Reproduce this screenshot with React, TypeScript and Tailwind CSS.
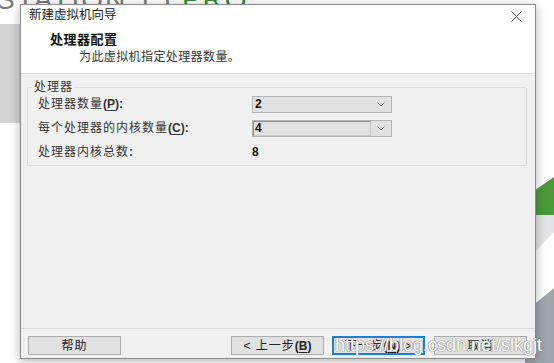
import { ReactNode } from 'react'

const FONT = "font-['Liberation_Sans','Noto_Sans_CJK_SC',sans-serif]"

function Chevron() {
  return (
    <svg width="8" height="5" viewBox="0 0 8 5">
      <path d="M0.5 0.5 L4 4 L7.5 0.5" fill="none" stroke="#7a7a7a" strokeWidth="1" />
    </svg>
  )
}

function Key({ k }: { k: string }) {
  return <span className="underline underline-offset-2">{k}</span>
}

function Btn({ children, primary }: { children: ReactNode; primary?: boolean }) {
  return (
    <button
      className={
        primary
          ? 'w-[93px] h-[19px] flex items-center justify-center bg-[#e1e1e1] border-2 border-[#1a7fd6] text-[12px] text-[#222] tracking-[1px]'
          : 'w-[93px] h-[19px] flex items-center justify-center bg-[#e1e1e1] border border-[#adadad] text-[12px] text-[#222] tracking-[1px]'
      }
    >
      {children}
    </button>
  )
}

export default function App() {
  return (
    <div className={`relative w-[554px] h-[363px] overflow-hidden bg-white ${FONT}`}>
      {/* splash behind the wizard */}
      <div className="absolute left-[-4px] top-[-14px] text-[28px] leading-[28px] tracking-[2px] text-[#7b7b7b] whitespace-nowrap font-['Liberation_Sans',sans-serif]">
        STATION 15 <span className="text-[#2f8a3c]">PRO</span>
      </div>
      <div className="absolute left-0 top-[24px] w-[30px] h-[99px] bg-[#d4d4d4]" />
      <svg className="absolute left-[525px] top-0" width="29" height="363" viewBox="0 0 29 363">
        <polygon points="29,177 0,197 0,215 29,215" fill="#4a9a3a" />
        <polygon points="0,215 29,215 29,232 0,262" fill="#e3e3e5" />
        <polygon points="0,312 29,288 29,363 0,363" fill="#9ea6ad" />
      </svg>

      {/* wizard window */}
      <div className="absolute left-[20px] top-[4px] w-[516px] h-[355px] flex flex-col border border-[#8a8a8a] bg-[#f0f0f0] shadow-[0_2px_10px_rgba(0,0,0,0.3)]">
        <div className="bg-white">
          <div className="h-[21px] flex items-center justify-between pl-[8px] pr-[13px]">
            <span className="text-[12.5px] text-[#222]">新建虚拟机向导</span>
            <svg width="11" height="11" viewBox="0 0 11 11" className="mt-[2px]">
              <path d="M0.5 0.5 L10.5 10.5 M10.5 0.5 L0.5 10.5" stroke="#555" strokeWidth="1" />
            </svg>
          </div>
          <div className="h-[48px] border-b border-[#d8d8d8] pt-[5px]">
            <div className="pl-[29px] text-[13px] leading-[18px] font-bold tracking-[0.5px] text-[#111]">处理器配置</div>
            <div className="pl-[58px] text-[12px] leading-[17px] tracking-[0.4px] text-[#333]">为此虚拟机指定处理器数量。</div>
          </div>
        </div>

        <div className="flex-1 pt-[13px] pl-[6px] pr-[8px] border-b border-[#d8d8d8]">
          <div className="relative border border-[#dcdcdc] rounded-[2px] pt-[4px] pb-[1px] pl-[10px]">
            <span className="absolute left-[4px] top-[-9px] px-[2px] bg-[#f0f0f0] text-[12px] leading-[16px] tracking-[1px] text-[#333]">处理器</span>
            <div className="h-[24px] flex items-center">
              <span className="w-[214px] text-[12px] tracking-[1px] text-[#333]">
                处理器数量<span className="font-bold tracking-normal">(<Key k="P" />):</span>
              </span>
              <div className="w-[140px] h-[17px] flex items-center justify-between bg-[#e1e1e1] border border-[#b4b4b4] pl-[2px] pr-[6px]">
                <span className="text-[12px] font-bold text-[#111]">2</span>
                <Chevron />
              </div>
            </div>
            <div className="h-[24px] flex items-center">
              <span className="w-[214px] text-[12px] tracking-[1px] text-[#333]">
                每个处理器的内核数量<span className="font-bold tracking-normal">(<Key k="C" />):</span>
              </span>
              <div className="w-[140px] h-[17px] flex items-center bg-[#e1e1e1] border border-[#b4b4b4]">
                <div className="w-[118px] h-[15px] flex items-center border border-[#8e8e8e] border-r-[#c8c8c8] border-b-[#c8c8c8] pl-[1px]">
                  <span className="text-[12px] font-bold text-[#111]">4</span>
                </div>
                <div className="flex-1 flex justify-center">
                  <Chevron />
                </div>
              </div>
            </div>
            <div className="h-[24px] flex items-center">
              <span className="w-[214px] text-[12px] tracking-[1px] text-[#333]">
                处理器内核总数<span className="font-bold tracking-normal">:</span>
              </span>
              <span className="text-[12px] font-bold text-[#111]">8</span>
            </div>
          </div>
        </div>

        <div className="h-[29px] flex items-start pt-[7px] pl-[7px] pr-[8px]">
          <Btn>帮助</Btn>
          <div className="flex-1" />
          <div className="flex gap-[8px]">
            <Btn>
              &lt; 上一步<span className="font-bold tracking-normal">(<Key k="B" />)</span>
            </Btn>
            <Btn primary>
              下一步<span className="font-bold tracking-normal">(<Key k="N" />)</span>&nbsp;&gt;
            </Btn>
            <div className="ml-[1px]">
              <Btn>取消</Btn>
            </div>
          </div>
        </div>
      </div>

      {/* blog watermark */}
      <div className="absolute right-[12px] bottom-[8px] text-[18px] leading-[20px] text-white whitespace-nowrap font-['Liberation_Sans',sans-serif] [text-shadow:0_0_1px_#8a8a8a,0_0_1px_#8a8a8a,0_0_1px_#8a8a8a]">
        https://blog.csdn.net/slkgjt
      </div>
    </div>
  )
}
